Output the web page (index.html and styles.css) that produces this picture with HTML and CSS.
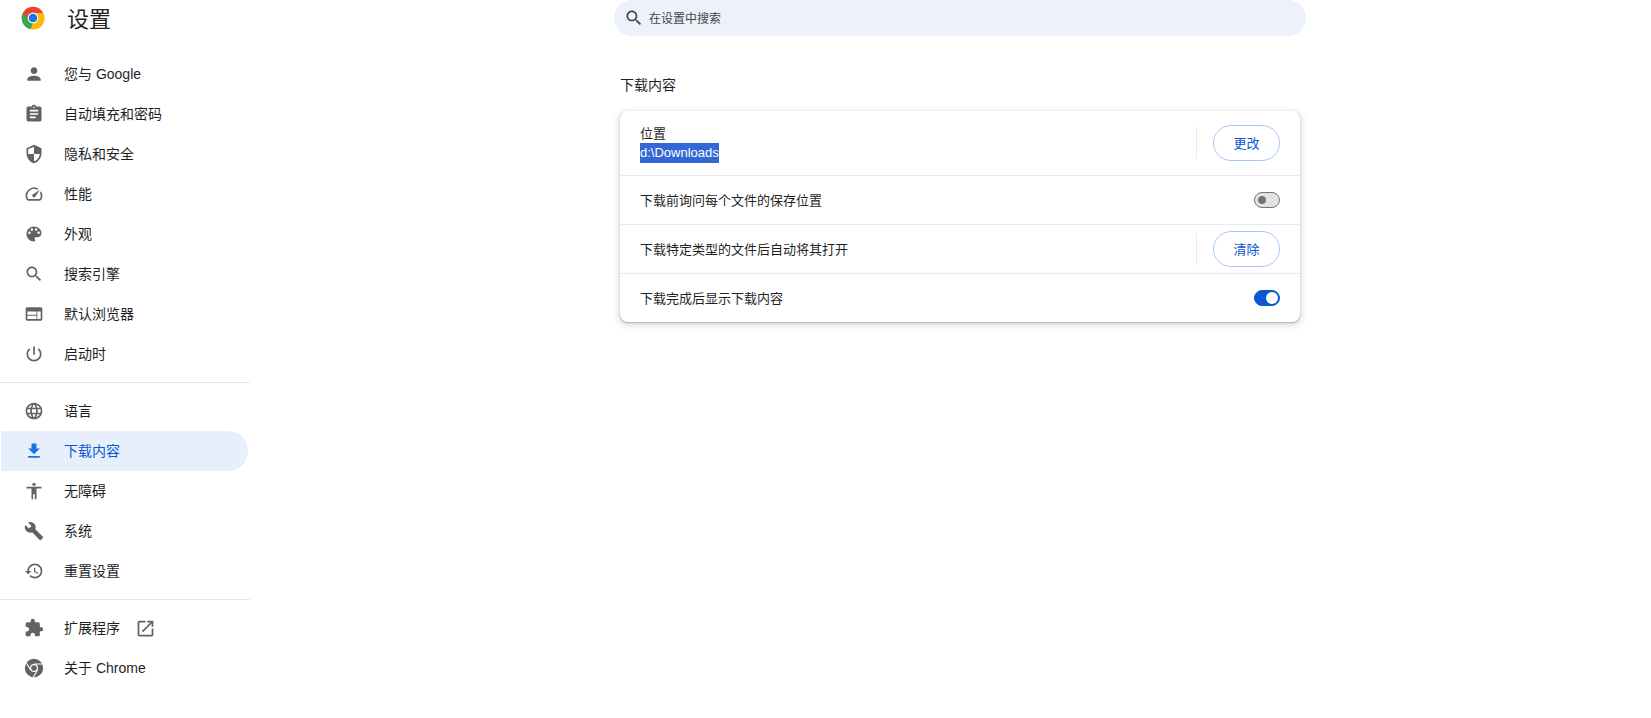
FILE: index.html
```html
<!DOCTYPE html>
<html lang="zh-CN">
<head>
<meta charset="utf-8">
<title>设置</title>
<link rel="stylesheet" href="styles.css">
</head>
<body>
<aside class="sidebar">
  <header class="brand">
    <svg class="logo" viewBox="0 0 24 24">
      <circle cx="12" cy="12" r="11.3" fill="#ea4335"/>
      <path fill="#34a853" d="M2.2 6.4 7.67 14.5 12 17 9.6 23.04A11.3 11.3 0 0 1 2.2 6.4z"/>
      <path fill="#fbbc04" d="M21.8 6.4A11.3 11.3 0 0 1 9.6 23.04L12 17l4.33-2.5L16.33 9.5 12 7h9.2z"/>
      <circle cx="12" cy="12" r="5.4" fill="#fff"/>
      <circle cx="12" cy="12" r="4.3" fill="#1a73e8"/>
    </svg>
    <h1 class="brand-title">设置</h1>
  </header>
  <nav class="menu">
    <a class="item"><svg class="icon" viewBox="0 0 24 24"><path d="M12 12c2.21 0 4-1.79 4-4s-1.79-4-4-4-4 1.79-4 4 1.79 4 4 4zm0 2c-2.67 0-8 1.34-8 4v2h16v-2c0-2.66-5.33-4-8-4z"/></svg>您与 Google</a>
    <a class="item"><svg class="icon" viewBox="0 0 24 24"><path d="M19 3h-4.18C14.4 1.84 13.3 1 12 1c-1.3 0-2.4.84-2.82 2H5c-1.1 0-2 .9-2 2v14c0 1.1.9 2 2 2h14c1.1 0 2-.9 2-2V5c0-1.1-.9-2-2-2zm-7 0c.55 0 1 .45 1 1s-.45 1-1 1-1-.45-1-1 .45-1 1-1zm2 14H7v-2h7v2zm3-4H7v-2h10v2zm0-4H7V7h10v2z"/></svg>自动填充和密码</a>
    <a class="item"><svg class="icon" viewBox="0 0 24 24"><path d="M12 1L3 5v6c0 5.55 3.84 10.74 9 12 5.16-1.26 9-6.45 9-12V5l-9-4zm0 10.99h7c-.53 4.12-3.28 7.79-7 8.94V12H5V6.3l7-3.11v8.8z"/></svg>隐私和安全</a>
    <a class="item"><svg class="icon" viewBox="0 0 24 24"><path d="M20.38 8.57l-1.23 1.85a8 8 0 0 1-.22 7.58H5.07A8 8 0 0 1 15.58 6.85l1.85-1.23A10 10 0 0 0 3.35 19a2 2 0 0 0 1.72 1h13.85a2 2 0 0 0 1.74-1 10 10 0 0 0-.27-10.44zm-9.79 6.84a2 2 0 0 0 2.83 0l5.66-8.49-8.49 5.66a2 2 0 0 0 0 2.83z"/></svg>性能</a>
    <a class="item"><svg class="icon" viewBox="0 0 24 24"><path d="M12 3c-4.97 0-9 4.03-9 9s4.03 9 9 9c.83 0 1.5-.67 1.5-1.5 0-.39-.15-.74-.39-1.01-.23-.26-.38-.61-.38-.99 0-.83.67-1.5 1.5-1.5H16c2.76 0 5-2.24 5-5 0-4.42-4.03-8-9-8zm-5.5 9c-.83 0-1.5-.67-1.5-1.5S5.67 9 6.5 9 8 9.67 8 10.5 7.33 12 6.5 12zm3-4C8.67 8 8 7.33 8 6.5S8.67 5 9.5 5s1.5.67 1.5 1.5S10.33 8 9.5 8zm5 0c-.83 0-1.5-.67-1.5-1.5S13.67 5 14.5 5s1.5.67 1.5 1.5S15.33 8 14.5 8zm3 4c-.83 0-1.5-.67-1.5-1.5S16.67 9 17.5 9s1.5.67 1.5 1.5-.67 1.5-1.5 1.5z"/></svg>外观</a>
    <a class="item"><svg class="icon" viewBox="0 0 24 24"><path d="M15.5 14h-.79l-.28-.27C15.41 12.59 16 11.11 16 9.5 16 5.91 13.09 3 9.5 3S3 5.91 3 9.5 5.91 16 9.5 16c1.61 0 3.09-.59 4.23-1.57l.27.28v.79l5 4.99L20.49 19l-4.99-5zm-6 0C7.01 14 5 11.99 5 9.5S7.01 5 9.5 5 14 7.01 14 9.5 11.99 14 9.5 14z"/></svg>搜索引擎</a>
    <a class="item"><svg class="icon" viewBox="0 0 24 24"><path d="M20 4H4c-1.1 0-1.99.9-1.99 2L2 18c0 1.1.9 2 2 2h16c1.1 0 2-.9 2-2V6c0-1.1-.9-2-2-2zm-5 14H4v-4h11v4zm0-5H4V9h11v4zm5 5h-4V9h4v9z"/></svg>默认浏览器</a>
    <a class="item"><svg class="icon" viewBox="0 0 24 24"><path d="M13 3h-2v10h2V3zm4.83 2.17l-1.42 1.42C17.99 7.86 19 9.81 19 12c0 3.87-3.13 7-7 7s-7-3.13-7-7c0-2.19 1.01-4.14 2.58-5.42L6.17 5.17C4.23 6.82 3 9.26 3 12c0 4.97 4.03 9 9 9s9-4.03 9-9c0-2.74-1.23-5.18-3.17-6.83z"/></svg>启动时</a>
    <hr class="rule">
    <a class="item"><svg class="icon" viewBox="0 0 24 24"><path d="M11.99 2C6.47 2 2 6.48 2 12s4.47 10 9.99 10C17.52 22 22 17.52 22 12S17.52 2 11.99 2zm6.93 6h-2.95c-.32-1.25-.78-2.45-1.38-3.56 1.84.63 3.37 1.91 4.33 3.56zM12 4.04c.83 1.2 1.48 2.53 1.91 3.96h-3.82c.43-1.43 1.08-2.76 1.91-3.96zM4.26 14C4.1 13.36 4 12.69 4 12s.1-1.36.26-2h3.38c-.08.66-.14 1.32-.14 2 0 .68.06 1.34.14 2H4.26zm.82 2h2.95c.32 1.25.78 2.45 1.38 3.56-1.84-.63-3.37-1.9-4.33-3.56zm2.95-8H5.08c.96-1.66 2.49-2.93 4.33-3.56C8.81 5.55 8.35 6.75 8.03 8zM12 19.96c-.83-1.2-1.48-2.53-1.91-3.96h3.82c-.43 1.43-1.08 2.76-1.91 3.96zM14.34 14H9.66c-.09-.66-.16-1.32-.16-2 0-.68.07-1.35.16-2h4.68c.09.65.16 1.32.16 2 0 .68-.07 1.34-.16 2zm.25 5.56c.6-1.11 1.06-2.31 1.38-3.56h2.95c-.96 1.65-2.49 2.93-4.33 3.56zM16.36 14c.08-.66.14-1.32.14-2 0-.68-.06-1.34-.14-2h3.38c.16.64.26 1.31.26 2s-.1 1.36-.26 2h-3.38z"/></svg>语言</a>
    <a class="item active"><svg class="icon" viewBox="0 0 24 24"><path d="M19 9h-4V3H9v6H5l7 7 7-7zM5 18v2h14v-2H5z"/></svg>下载内容</a>
    <a class="item"><svg class="icon" viewBox="0 0 24 24"><path d="M12 2c1.1 0 2 .9 2 2s-.9 2-2 2-2-.9-2-2 .9-2 2-2zm9 7h-6v13h-2v-6h-2v6H9V9H3V7h18v2z"/></svg>无障碍</a>
    <a class="item"><svg class="icon" viewBox="0 0 24 24"><path d="M22.7 19l-9.1-9.1c.9-2.3.4-5-1.5-6.9-2-2-5-2.4-7.4-1.3L9 6 6 9 1.6 4.7C.4 7.1.9 10.1 2.9 12.1c1.9 1.9 4.6 2.4 6.9 1.5l9.1 9.1c.4.4 1 .4 1.4 0l2.3-2.3c.5-.4.5-1.1.1-1.4z"/></svg>系统</a>
    <a class="item"><svg class="icon" viewBox="0 0 24 24"><path d="M13 3c-4.97 0-9 4.03-9 9H1l3.89 3.89.07.14L9 12H6c0-3.87 3.13-7 7-7s7 3.13 7 7-3.13 7-7 7c-1.93 0-3.68-.79-4.94-2.06l-1.42 1.42C8.27 19.99 10.51 21 13 21c4.97 0 9-4.03 9-9s-4.03-9-9-9zm-1 5v5l4.28 2.54.72-1.21-3.5-2.08V8H12z"/></svg>重置设置</a>
    <hr class="rule">
    <a class="item"><svg class="icon" viewBox="0 0 24 24"><path d="M20.5 11H19V7c0-1.1-.9-2-2-2h-4V3.5C13 2.12 11.88 1 10.5 1S8 2.12 8 3.5V5H4c-1.1 0-1.99.9-1.99 2v3.8H3.5c1.49 0 2.7 1.21 2.7 2.7s-1.21 2.7-2.7 2.7H2V20c0 1.1.9 2 2 2h3.8v-1.5c0-1.49 1.21-2.7 2.7-2.7 1.49 0 2.7 1.21 2.7 2.7V22H17c1.1 0 2-.9 2-2v-4h1.5c1.38 0 2.5-1.12 2.5-2.5S21.88 11 20.5 11z"/></svg>扩展程序<svg class="icon external" viewBox="0 0 24 24"><path d="M19 19H5V5h7V3H5a2 2 0 0 0-2 2v14a2 2 0 0 0 2 2h14c1.1 0 2-.9 2-2v-7h-2v7zM14 3v2h3.59l-9.83 9.83 1.41 1.41L19 6.41V10h2V3h-7z"/></svg></a>
    <a class="item"><svg class="icon" viewBox="0 0 24 24"><path fill-rule="evenodd" d="M12 1a11 11 0 1 0 0 22 11 11 0 0 0 0-22zm0 6.2a4.8 4.8 0 1 1 0 9.6 4.8 4.8 0 0 1 0-9.6z"/><circle cx="12" cy="12" r="3.4"/><path class="icon-cut" d="M12 7.2h10M7.84 14.4 3 6M16.16 14.4l-5 8.6"/></svg>关于 Chrome</a>
  </nav>
</aside>
<main class="content">
  <div class="search">
    <svg class="search-icon" viewBox="0 0 24 24"><path d="M15.5 14h-.79l-.28-.27C15.41 12.59 16 11.11 16 9.5 16 5.91 13.09 3 9.5 3S3 5.91 3 9.5 5.91 16 9.5 16c1.61 0 3.09-.59 4.23-1.57l.27.28v.79l5 4.99L20.49 19l-4.99-5zm-6 0C7.01 14 5 11.99 5 9.5S7.01 5 9.5 5 14 7.01 14 9.5 11.99 14 9.5 14z"/></svg>
    <span class="search-text">在设置中搜索</span>
  </div>
  <section class="panel">
    <h2 class="panel-title">下载内容</h2>
    <div class="card">
      <div class="row">
        <div class="label label-stack">
          <div class="label-name">位置</div>
          <div><span class="selected">d:\Downloads</span></div>
        </div>
        <div class="vline"></div>
        <button class="btn">更改</button>
      </div>
      <div class="row">
        <div class="label">下载前询问每个文件的保存位置</div>
        <span class="toggle"><span class="knob"></span></span>
      </div>
      <div class="row">
        <div class="label">下载特定类型的文件后自动将其打开</div>
        <div class="vline"></div>
        <button class="btn">清除</button>
      </div>
      <div class="row">
        <div class="label">下载完成后显示下载内容</div>
        <span class="toggle on"><span class="knob"></span></span>
      </div>
    </div>
  </section>
</main>
</body>
</html>
```

FILE: styles.css
```css
* { box-sizing: border-box; }
html, body { height: 100%; }
body {
  margin: 0;
  display: flex;
  background: #fff;
  color: #1f1f1f;
  font-family: "Liberation Sans", "Noto Sans CJK SC", sans-serif;
  font-size: 13px;
  overflow: hidden;
}
.sidebar { width: 250px; flex: none; }
.brand {
  height: 54px;
  display: flex;
  align-items: flex-start;
  padding: 6px 0 0 21px;
}
.logo { width: 24px; height: 24px; flex: none; }
.brand-title {
  margin: 1px 0 0 22px;
  font-size: 22px;
  line-height: 26px;
  font-weight: 400;
  color: #1f1f1f;
}
.menu { display: flex; flex-direction: column; }
.item {
  height: 40px;
  width: 247px;
  margin-left: 1px;
  padding-left: 23px;
  display: flex;
  align-items: center;
  gap: 20px;
  font-size: 14px;
  line-height: 20px;
  border-radius: 0 20px 20px 0;
  color: #1f1f1f;
}
.item.active { background: #e7effc; color: #0b57d0; }
.item.active .icon { fill: #1a73e8; }
.icon { width: 20px; height: 20px; flex: none; fill: #5f6368; }
.icon.external { width: 21px; height: 21px; margin-left: -5px; }
.icon-cut { fill: none; stroke: #fff; stroke-width: 1.3; }
.rule {
  width: 250px;
  height: 1px;
  margin: 8px 0;
  border: 0;
  background: #e5e7eb;
}
.content { width: 692px; margin-left: 364px; flex: none; }
.search {
  height: 36px;
  border-radius: 18px;
  background: #ecf1fa;
  display: flex;
  align-items: center;
  gap: 5px;
  padding-left: 10px;
  font-size: 12px;
  color: #474747;
}
.search-icon { width: 20px; height: 20px; fill: #474747; }
.search-text { padding-bottom: 2px; }
.panel { margin: 39px 6px 0; }
.panel-title {
  margin: 0 0 16px;
  font-size: 14px;
  line-height: 20px;
  font-weight: 400;
}
.card {
  background: #fff;
  border-radius: 8px;
  box-shadow: 0 1px 2px rgba(60, 64, 67, .35), 0 2px 6px 2px rgba(60, 64, 67, .15);
}
.row {
  height: 49px;
  display: flex;
  align-items: center;
  padding: 0 20px;
  border-top: 1px solid #e9eaec;
}
.row:first-child { border-top: 0; height: 64px; }
.label { flex: 1; line-height: 20px; padding-top: 2px; }
.label-stack { padding-top: 0; }
.label-name { height: 20px; padding-top: 2px; line-height: 18px; }
.selected { display: inline-block; background: #3367d6; color: #fff; }
.vline { width: 1px; height: 32px; background: #e9eaec; margin-right: 16px; }
.btn {
  width: 67px;
  height: 36px;
  padding: 0 0 2px;
  border: 1px solid #a8c7fa;
  border-radius: 18px;
  background: #fff;
  color: #0b57d0;
  font: inherit;
}
.toggle {
  width: 26px;
  height: 16px;
  border: 1px solid #747775;
  border-radius: 8px;
  background: #e3e3e3;
  display: flex;
  align-items: center;
  padding-left: 3px;
}
.knob { width: 8px; height: 8px; border-radius: 50%; background: #747775; }
.toggle.on { background: #0b57d0; border-color: #0b57d0; justify-content: flex-end; padding: 0 1px 0 0; }
.toggle.on .knob { width: 12px; height: 12px; background: #fff; }
```
